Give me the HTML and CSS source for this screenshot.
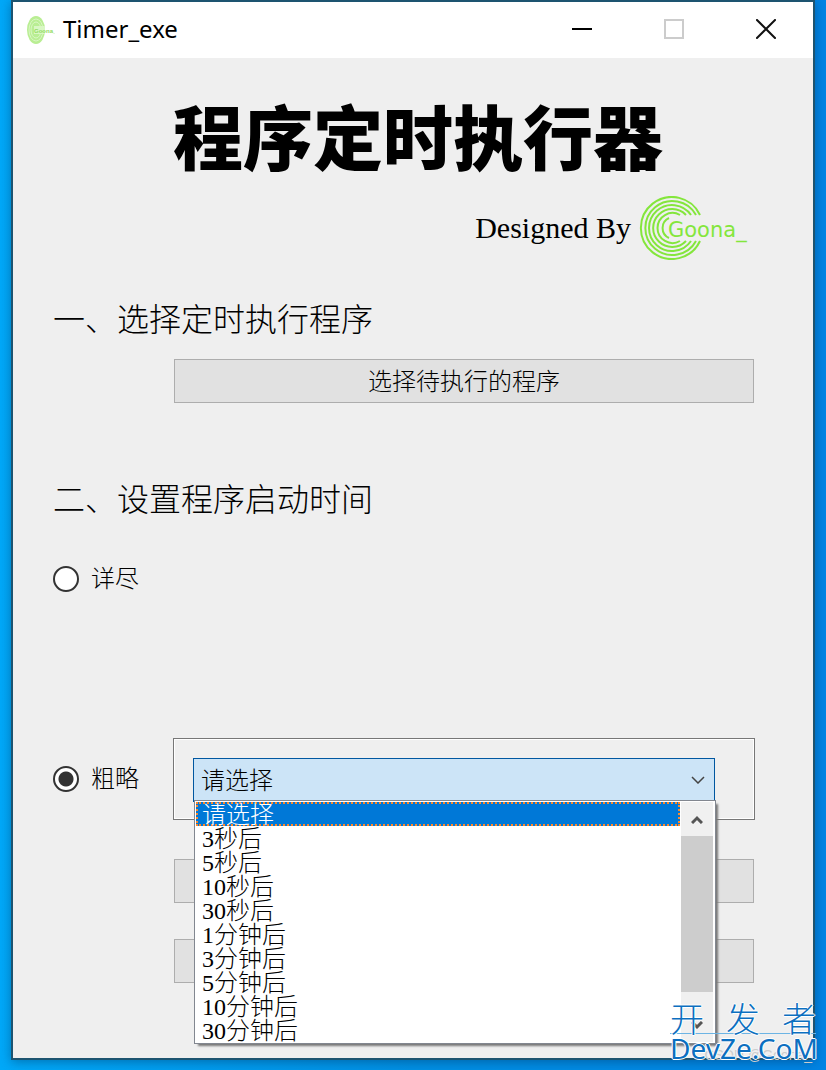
FILE: index.html
```html
<!DOCTYPE html>
<html lang="zh-CN">
<head>
  <meta charset="UTF-8" />
  <meta name="viewport" content="width=device-width, initial-scale=1.0"/>
  <title>Timer_exe</title>
  <link rel="stylesheet" href="styles.css">
</head>
<body>
  <div class="window">
    <header class="titlebar">
      <svg class="app-icon" viewBox="0 0 28 30" aria-hidden="true">
        <ellipse cx="9" cy="15" rx="9" ry="14" fill="#b9ee93"/>
        <g fill="none" stroke="#d9f7c4">
          <ellipse cx="9" cy="15" rx="7" ry="11"/>
          <ellipse cx="9" cy="15" rx="5" ry="8"/>
        </g>
        <path d="M7 11h11v8H7z" fill="#d9f7c4"/>
        <text class="icon-text" x="7" y="18" font-size="6">Goona_</text>
      </svg>
      <span class="app-name">Timer_exe</span>
      <div class="window-buttons">
        <button type="button" aria-label="Minimize">
          <svg viewBox="0 0 20 20"><path d="M0 10h20" stroke="#000" stroke-width="2"/></svg>
        </button>
        <button type="button" aria-label="Maximize" disabled>
          <svg viewBox="0 0 20 20"><rect x="1" y="1" width="18" height="18" fill="none" stroke="#ccc" stroke-width="2"/></svg>
        </button>
        <button type="button" aria-label="Close">
          <svg viewBox="0 0 20 20"><path d="M1 1L19 19M19 1L1 19" stroke="#111" stroke-width="2" stroke-linecap="square"/></svg>
        </button>
      </div>
    </header>

    <main class="content">
      <h1>程序定时执行器</h1>

      <div class="brand">
        <span>Designed By</span>
        <svg class="logo" viewBox="0 0 112 64" role="img" aria-label="Goona_">
          <g fill="none" stroke="#84e63c" stroke-width="2">
            <path d="M61 19A31 31 0 1 0 61 45"/>
            <path d="M57 19A27 27 0 1 0 57 45"/>
            <path d="M52 19A23 23 0 1 0 52 45"/>
            <path d="M47 19A19 19 0 1 0 47 45"/>
            <path d="M41 19A15 15 0 1 0 41 45"/>
            <path d="M30 22A11 11 0 0 0 30 42"/>
          </g>
          <text class="logo-text" x="29" y="41" font-size="21">Goona_</text>
        </svg>
      </div>

      <h2>一、选择定时执行程序</h2>
      <button type="button" class="btn">选择待执行的程序</button>

      <h2 class="time-title">二、设置程序启动时间</h2>
      <div class="option-row">
        <label><input type="radio" name="mode" />详尽</label>
      </div>

      <div class="option-row rough">
        <label><input type="radio" name="mode" checked />粗略</label>
        <div class="group-box">
          <div class="combo">
            <select aria-label="启动时间">
              <option>请选择</option>
            </select>
            <svg class="arrow" viewBox="0 0 14 8" aria-hidden="true"><path d="M1 1l6 6 6-6" fill="none" stroke="#444" stroke-width="1.5"/></svg>
            <div class="dropdown">
              <ul role="listbox" aria-label="启动时间">
                <li role="option" aria-selected="true" class="selected">请选择</li>
                <li role="option">3秒后</li>
                <li role="option">5秒后</li>
                <li role="option">10秒后</li>
                <li role="option">30秒后</li>
                <li role="option">1分钟后</li>
                <li role="option">3分钟后</li>
                <li role="option">5分钟后</li>
                <li role="option">10分钟后</li>
                <li role="option">30分钟后</li>
              </ul>
              <div class="scrollbar">
                <button type="button" aria-label="Scroll up">
                  <svg viewBox="0 0 12 9"><path d="M1 8l5-5 5 5" fill="none" stroke="#555" stroke-width="3"/></svg>
                </button>
                <div class="thumb"></div>
                <button type="button" aria-label="Scroll down">
                  <svg viewBox="0 0 12 9"><path d="M1 1l5 5 5-5" fill="none" stroke="#555" stroke-width="3"/></svg>
                </button>
              </div>
            </div>
          </div>
        </div>
      </div>

      <div class="actions">
        <button type="button" class="btn" aria-label="Start"></button>
        <button type="button" class="btn" aria-label="Cancel"></button>
      </div>
    </main>
  </div>

  <div class="credit">CSDN @Goona_</div>
  <div class="watermark">
    <div class="watermark-name"><span>开</span><span>发</span><span>者</span></div>
    <div class="watermark-site">DevZe.CoM</div>
  </div>
</body>
</html>
```
FILE: styles.css
```css
* {
  box-sizing: border-box;
}

body {
  margin: 0;
  padding: 0 11px 10px;
  min-height: 100vh;
  background: linear-gradient(90deg, #00a8f8, #0090e4 50%, #0084e4);
  font-family: "Liberation Serif", "Noto Sans CJK SC", serif;
  font-size: 24px;
  font-weight: 300;
  color: #000;
}

button, select {
  font: inherit;
  color: inherit;
}

.window {
  background: #efefef;
  border: 2px solid #1d5470;
  box-shadow: 0 2px 10px rgba(0, 40, 80, 0.4);
}

.titlebar {
  display: flex;
  align-items: center;
  height: 56px;
  padding-left: 14px;
  background: #fff;
}

.app-icon {
  width: 28px;
  height: 30px;
}

.icon-text {
  font-family: "Liberation Sans", sans-serif;
  font-weight: bold;
  fill: #8fdc60;
}

.app-name {
  margin-left: 8px;
  padding-bottom: 3px;
  font-family: "Noto Sans", sans-serif;
  font-weight: 400;
}

.window-buttons {
  display: flex;
  margin-left: auto;
  padding: 0 1px 2px 0;
}

.window-buttons button {
  width: 92px;
  height: 54px;
  padding: 0;
  border: none;
  background: none;
}

.window-buttons svg {
  display: block;
  width: 20px;
  height: 20px;
  margin: auto;
}

.content {
  padding: 49px 58px 75px 40px;
}

h1 {
  margin: 0;
  padding-left: 28px;
  font-size: 70px;
  line-height: 70px;
  font-weight: 900;
  text-align: center;
  white-space: nowrap;
}

.brand {
  display: flex;
  justify-content: flex-end;
  align-items: center;
  gap: 8px;
  margin-top: 19px;
  padding-right: 4px;
  font-size: 30px;
}

.logo {
  width: 112px;
  height: 64px;
}

.logo-text {
  font-family: "DejaVu Sans", sans-serif;
  font-weight: 400;
  fill: #84e63c;
}

h2 {
  margin: 40px 0 0;
  font-size: 32px;
  line-height: 40px;
  font-weight: 300;
}

.time-title {
  margin-top: 77px;
}

.btn {
  display: block;
  height: 44px;
  padding: 0 0 3px;
  border: 1px solid #adadad;
  background: #e1e1e1;
}

h2 + .btn {
  width: calc(100% - 122px);
  margin: 19px 1px 0 121px;
}

.option-row {
  display: grid;
  grid-template-columns: 120px 1fr;
  align-items: center;
  margin-top: 46px;
}

.option-row label {
  display: flex;
  align-items: center;
  gap: 12px;
  line-height: 26px;
}

input[type="radio"] {
  appearance: none;
  width: 26px;
  height: 26px;
  margin: 0;
  border: 2px solid #333;
  border-radius: 50%;
  background: #fff;
}

input[type="radio"]:checked {
  background: radial-gradient(circle, #333 7px, #fff 8px);
}

.rough {
  margin-top: 146px;
}

.group-box {
  padding: 19px 39px 17px 19px;
  border: 1px solid #777;
  box-shadow: inset 0 0 0 1px #fff;
}

.combo {
  position: relative;
}

.combo select {
  display: block;
  appearance: none;
  width: 100%;
  height: 44px;
  padding: 2px 7px 0;
  border: 1px solid #0057a0;
  border-radius: 0;
  background: #cce4f7;
}

.arrow {
  position: absolute;
  top: 18px;
  right: 10px;
  width: 14px;
  height: 8px;
}

.dropdown {
  position: absolute;
  top: 42px;
  left: 1px;
  right: -1px;
  display: flex;
  gap: 1px;
  padding: 1px 2px 1px 1px;
  border: 1px solid #828790;
  background: #fff;
  box-shadow: 3px 3px 2px -1px #777;
}

.dropdown ul {
  flex: 1;
  margin: 0;
  padding: 0;
  list-style: none;
}

.dropdown li {
  height: 24px;
  padding-left: 6px;
  line-height: 26px;
}

.dropdown .selected {
  padding-left: 4px;
  border: 2px dotted #ff8728;
  line-height: 22px;
  background: #0078d7;
  color: #fff;
}

.scrollbar {
  display: flex;
  flex-direction: column;
  width: 32px;
  background: #f0f0f0;
}

.scrollbar button {
  height: 34px;
  padding: 0;
  border: none;
  background: none;
}

.scrollbar button:last-child {
  margin-top: auto;
}

.scrollbar svg {
  display: block;
  width: 12px;
  height: 9px;
  margin: auto;
}

.thumb {
  height: 156px;
  background: #cdcdcd;
}

.actions {
  display: grid;
  gap: 36px;
  margin: 39px 1px 0 121px;
}

.credit {
  position: absolute;
  right: 14px;
  bottom: 7px;
  font-family: "Liberation Sans", sans-serif;
  font-size: 14px;
  color: #ccc;
}

.watermark {
  position: absolute;
  right: 10px;
  bottom: 8px;
  width: 146px;
  font-family: "Noto Sans", "Noto Sans CJK SC", sans-serif;
  font-weight: 400;
  color: #0c6fc0;
  text-shadow: 1px 0 #fff, -1px 0 #fff, 0 1px #fff, 0 -1px #fff;
}

.watermark-name {
  display: flex;
  justify-content: space-between;
  border-bottom: 1px solid #6cb4e4;
  font-family: "Noto Sans CJK SC", sans-serif;
  font-weight: 300;
  font-size: 34px;
  line-height: 30px;
}

.watermark-site {
  font-size: 28px;
  line-height: 28px;
}
```
